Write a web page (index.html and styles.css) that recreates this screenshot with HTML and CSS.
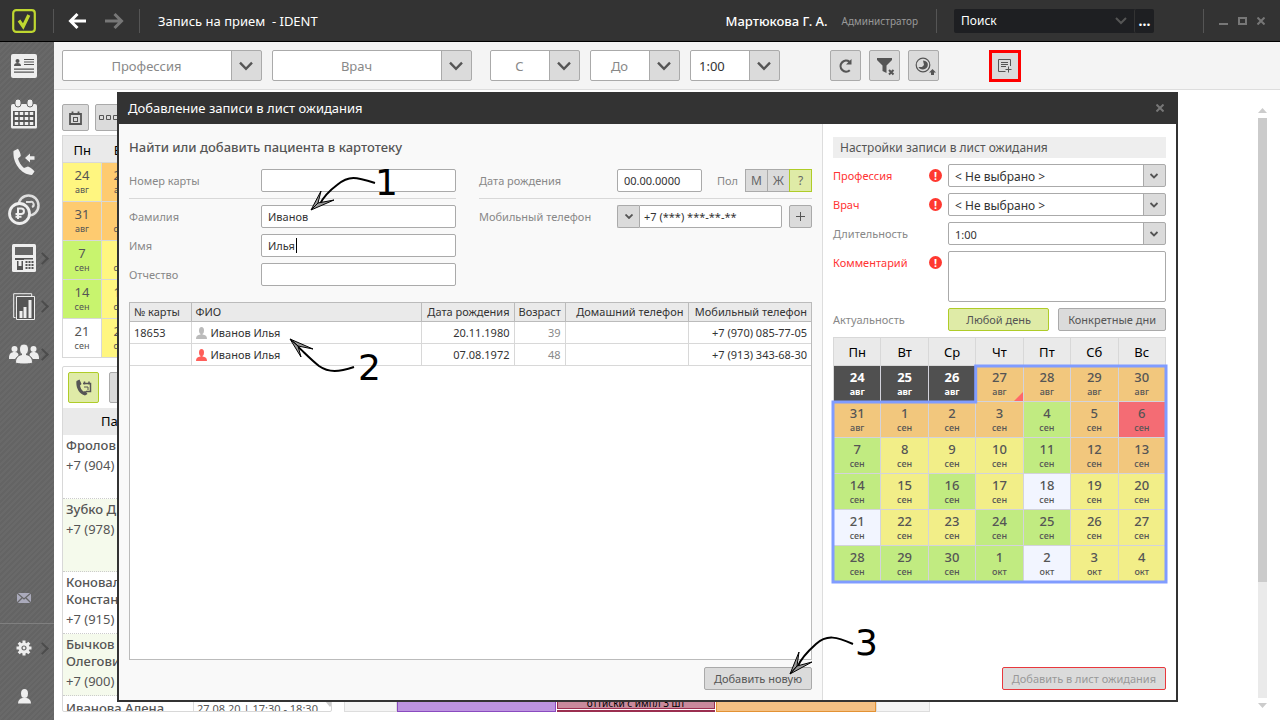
FILE: index.html
```html
<!DOCTYPE html>
<html lang="ru">
<head>
<meta charset="utf-8">
<title>Запись на прием - IDENT</title>
<link rel="stylesheet" href="styles.css">
</head>
<body>
<header class="topbar">
  <svg class="logo" width="24" height="24" viewBox="0 0 24 24" fill="none" stroke="#bfd730"><rect x="1.2" y="1.2" width="21.6" height="21.6" rx="3" stroke-width="2.2"/><path d="M7 11.5l4.200 6L16.800 6" stroke-width="3.200"/></svg>
  <span class="sep"></span>
  <button class="nav-arrow" aria-label="Назад"><svg width="20" height="18" viewBox="0 0 20 18" fill="none" stroke="#fff" stroke-width="3"><path d="M9.500 2L2.500 9l7 7M2.500 9H18"/></svg></button>
  <button class="nav-arrow" aria-label="Вперед"><svg width="20" height="18" viewBox="0 0 20 18" fill="none" stroke="#777" stroke-width="3"><path d="M9.500 2l7 7-7 7M16.500 9H0"/></svg></button>
  <span class="sep"></span>
  <h1 class="page-title">Запись на прием&nbsp; - IDENT</h1>
  <span class="user">Мартюкова Г. А.</span>
  <span class="role">Администратор</span>
  <span class="sep"></span>
  <div class="search">
    <input type="text" placeholder="Поиск" aria-label="Поиск">
    <button class="search-drop" aria-label="История поиска"><svg width="12" height="8" viewBox="0 0 12 8" fill="none" stroke="#555" stroke-width="2"><path d="M1 1l5 5 5-5"/></svg></button>
    <button class="search-more" aria-label="Еще">...</button>
  </div>
  <span class="sep win-sep"></span>
  <div class="window-buttons">
    <button aria-label="Свернуть"><svg width="9" height="10" viewBox="0 0 9 10"><path d="M0 7h9v2H0z" fill="#777"/></svg></button>
    <button aria-label="Развернуть"><svg width="9" height="8" viewBox="0 0 9 8" fill="none" stroke="#777" stroke-width="2"><path d="M1 1h7v6H1z"/></svg></button>
    <button aria-label="Закрыть"><svg width="8" height="8" viewBox="0 0 8 8" stroke="#777" stroke-width="2"><path d="M.500.500l7 7M7.500.500l-7 7"/></svg></button>
  </div>
</header>

<div class="workspace">
  <nav class="sidebar">
    <button aria-label="Картотека"><svg width="26" height="24" viewBox="0 0 26 24"><rect width="26" height="24" rx="2" fill="#eee"/><g fill="#555"><circle cx="6.500" cy="7" r="2"/><path d="M3 12c0-2 1-3 3.500-3S10 10 10 12zM13 5h10v1H13zM13 7.500h10v1H13zM13 10h10v1H13zM3 14.500h20v1.200H3zM3 17.500h20v1.200H3z"/></g></svg></button>
    <button aria-label="Расписание"><svg width="26" height="30" viewBox="0 0 26 30"><path d="M2 5h22a2 2 0 0 1 2 2v21a1.500 1.500 0 0 1-1.500 1.500h-23A1.500 1.500 0 0 1 0 28V7a2 2 0 0 1 2-2z" fill="#eee"/><path d="M2 12h22v15H2z" fill="#555"/><g fill="#eee"><rect x="4" y="0" width="6" height="8" rx="3" stroke="#666"/><rect x="16" y="0" width="6" height="8" rx="3" stroke="#666"/></g><path d="M5.500 13v14M10.500 13v14M15.500 13v14M20.500 13v14" stroke="#eee" stroke-width="3.500" stroke-dasharray="3 2"/></svg></button>
    <button aria-label="Звонки"><svg width="24" height="28" viewBox="0 0 24 28" fill="#eee"><path d="M1.500 3L6 .800C7.500 3 8.500 5 8.800 8L6 10.500c1 4 3 7 6 9.500l4-1.500c3 1 5 3 6.500 5L20 27C9 26.500.500 15 1.500 3zM13 10l5-4.500v2.800h4.500v3.400H18v2.800z"/></svg></button>
    <button aria-label="Финансы"><svg width="32" height="32" viewBox="0 0 32 32" fill="none" stroke="#eee"><circle cx="20.500" cy="11.500" r="10" stroke-width="2.500" stroke="#ddd"/><path d="M18 8h4a2.500 2.500 0 0 1 2 5" stroke="#ddd" stroke-width="2"/><circle cx="11.500" cy="19.500" r="10" fill="#666" stroke-width="2.800"/><path d="M10 25V14.500h3.200a2.700 2.700 0 0 1 0 5.500H7.500M7.500 22.800h6" stroke-width="2"/></svg></button>
    <button class="more" aria-label="Касса"><svg width="24" height="28" viewBox="0 0 24 28"><rect width="24" height="28" rx="1.500" fill="#eee"/><path d="M3 3h18v8H3z" fill="#666"/><path d="M3 14h9v2H3zM5 17h6v9H5z" fill="#555"/><path d="M6.500 17h3v5h-3z" fill="#eee"/><path d="M12 14h9v1.500h-9z" fill="#555"/><path d="M14.500 17v8M17.500 17v8M20.500 17v8" stroke="#555" stroke-width="2" stroke-dasharray="2 1"/></svg></button>
    <button class="more" aria-label="Отчеты"><svg width="22" height="27" viewBox="0 0 22 27" fill="none" stroke="#eee"><path d="M2.500 24.500H.700V.700h18V3"/><path d="M3.500 3.500h18v23h-18z" fill="#555"/><path d="M8 25v-7M12 25V14M17 25V7" stroke-width="3"/></svg></button>
    <button class="more" aria-label="Пациенты"><svg width="30" height="21" viewBox="0 0 30 21" fill="#eee"><circle cx="5.500" cy="5" r="3"/><circle cx="24.500" cy="5" r="3"/><path d="M0 14c0-4 2-6 5.500-6 3 0 4 1.500 4 3.500L6 15H0zM30 14c0-4-2-6-5.500-6-3 0-4 1.500-4 3.500L24 15h6z"/><path d="M15 0c3 0 4.500 2 4.500 5s-1 4.500-2.500 5.500c4 1 6.500 3 6.500 8 0 2-17 2-17 0 0-5 2.500-7 6.500-8-1.500-1-2.500-2.500-2.500-5.500S12 0 15 0z" stroke="#666"/></svg></button>
    <button class="mail" aria-label="Почта"><svg width="14" height="10" viewBox="0 0 14 10"><rect width="14" height="10" fill="#aab"/><path d="M0 0l7 6 7-6M0 10l5-5M14 10L9 5" fill="none" stroke="#666" stroke-width="1.300"/></svg></button>
    <button class="more settings" aria-label="Настройки"><svg width="16" height="16" viewBox="-8 -8 16 16"><g stroke="#eee" stroke-width="3"><path d="M0-7.500v15M-7.500 0h15M-5.300-5.300L5.300 5.300M-5.300 5.300L5.300-5.300"/></g><circle r="5.500" fill="#eee"/><circle r="2" fill="#eee" stroke="#666" stroke-width="1.200"/></svg></button>
    <button aria-label="Профиль"><svg width="13" height="15" viewBox="0 0 13 15" fill="#eee"><ellipse cx="6.500" cy="4.500" rx="3.500" ry="4.500"/><path d="M0 14.500c0-3.500 2-5 4.500-5.500h4c2.500.500 4.500 2 4.500 5.500z"/></svg></button>
  </nav>

  <main class="content">
    <div class="toolbar">
      <select class="big-select wide" aria-label="Профессия"><option>Профессия</option></select>
      <select class="big-select wide last-wide" aria-label="Врач"><option>Врач</option></select>
      <select class="big-select" aria-label="С"><option>С</option></select>
      <select class="big-select" aria-label="До"><option>До</option></select>
      <select class="big-select filled" aria-label="Длительность приема"><option>1:00</option></select>
      <div class="tool-buttons">
        <button class="tool" aria-label="Обновить"><svg width="15" height="16" viewBox="0 0 15 16" fill="none" stroke="#555" stroke-width="2.200"><path d="M11.500 3.800A5.500 5.500 0 1 0 11.800 12.200"/><path d="M13.500 1v5.500H8z" fill="#555" stroke="none"/></svg></button>
        <button class="tool low" aria-label="Сбросить фильтр"><svg width="18" height="18" viewBox="0 0 18 18"><path d="M0 0h15v2L9.500 7.500V15l-4-2V7.500L0 2z" fill="#555"/><path d="M12 12l4.500 4.500M16.500 12L12 16.500" stroke="#555" stroke-width="2"/></svg></button>
        <button class="tool low" aria-label="История"><svg width="21" height="20" viewBox="0 0 21 20"><circle cx="8" cy="8" r="6.800" fill="none" stroke="#555" stroke-width="1.200"/><path d="M8 3.500c7 0 6 9 0 9-2.500 0-4-1-4.500-2.500H7l2-2z" fill="#555"/><path d="M14 15.500L17.500 12l3.500 3.500h-2V18h-3v-2.500z" fill="#555"/></svg></button>
      </div>
      <button class="tool marked" aria-label="Лист ожидания"><svg width="14" height="14" viewBox="0 0 14 14" fill="none" stroke="#555"><path d="M7.500 12.500h-7V.500h12V7M3 3.500h7M3 5.500h7M3 7.500h5M10.500 7.500v6M7.500 10.500h6"/></svg></button>
    </div>

    <div class="board">
      <section class="left-column">
        <div class="mini-buttons">
          <button class="mini" aria-label="Сегодня"><svg width="13" height="14" viewBox="0 0 13 14" fill="none" stroke="#555"><path d="M1 3h11v10H1z" stroke-width="1.800"/><path d="M3.500.500V4M9.500.500V4" stroke-width="1.800"/><rect x="4.500" y="6.500" width="4" height="4"/></svg></button>
          <button class="mini" aria-label="Период"><svg width="19" height="5" viewBox="0 0 19 5" fill="none" stroke="#555"><path d="M.500.500h4v4h-4zM7.500.500h4v4h-4zM14.500.500h4v4h-4z"/></svg></button>
        </div>
        <table class="mini-calendar">
          <colgroup><col class="day"><col class="day"><col></colgroup>
          <tr><th>Пн</th><th>Вт</th><th></th></tr>
          <tr><td class="y">24<small>авг</small></td><td class="o">25<small>авг</small></td><td></td></tr>
          <tr><td class="o">31<small>авг</small></td><td class="o">1<small>сен</small></td><td></td></tr>
          <tr><td class="g">7<small>сен</small></td><td class="y">8<small>сен</small></td><td></td></tr>
          <tr><td class="g">14<small>сен</small></td><td class="y">15<small>сен</small></td><td></td></tr>
          <tr><td>21<small>сен</small></td><td class="y">22<small>сен</small></td><td></td></tr>
        </table>
        <div class="waiting">
          <div class="waiting-tools">
            <button class="call" aria-label="Обзвон"><svg width="16" height="17" viewBox="0 0 16 17" fill="#555"><path d="M.500 2L3.500.500 5.500 5 4 6.500c.500 2.500 1.500 4.500 3.500 6l2-.500 2 3-2.500 1.500C3 15.500-.500 8 .500 2z"/><path d="M7 4.500h7.500v8H10M8.500 2.500v3M13 2.500v3" fill="none" stroke="#555" stroke-width="1.500"/><path d="M8 8h4v3" fill="none" stroke="#555"/></svg></button>
            <button class="call plain" aria-label="Список"></button>
          </div>
          <div class="waiting-head">Пациент</div>
          <div class="patients">
            <div class="patient tall">Фролов<span>+7 (904)</span></div>
            <div class="patient taller alt">Зубко Д.<span>+7 (978)</span></div>
            <div class="patient">Коновалов Константин<span>+7 (915)</span></div>
            <div class="patient alt">Бычков Олегович<span>+7 (900)</span></div>
            <div class="patient split"><b>Иванова Алена</b><time>27.08.20 | 17:30 - 18:30</time><svg width="10" height="6" viewBox="0 0 10 6"><path d="M0 0h10L5 6z" fill="#ccc"/></svg></div>
          </div>
        </div>
      </section>
      <section class="schedule">
        <div class="hours"></div>
        <div class="visit purple"></div>
        <div class="visit-stack"><div class="visit pink">оттиски с импл 3 шт</div><div class="visit pink next"></div></div>
        <div class="visit orange"></div>
        <div class="hours"></div>
      </section>
      <div class="scrollbar">
        <svg width="9" height="5" viewBox="0 0 9 5"><path d="M0 5h9L4.500 0z" fill="#ccc"/></svg>
        <div class="track"><div class="thumb"></div></div>
        <svg width="9" height="5" viewBox="0 0 9 5"><path d="M0 0h9L4.500 5z" fill="#ccc"/></svg>
      </div>
    </div>
  </main>
</div>

<div class="dialog" role="dialog" aria-labelledby="dialog-title">
  <div class="dialog-title"><h2 id="dialog-title">Добавление записи в лист ожидания</h2><button aria-label="Закрыть окно"><svg width="8" height="8" viewBox="0 0 8 8" stroke="#777" stroke-width="2"><path d="M.500.500l7 7M7.500.500l-7 7"/></svg></button></div>
  <div class="dialog-body">
    <section class="search-pane">
      <h3>Найти или добавить пациента в картотеку</h3>
      <div class="form">
        <div class="form-part">
          <div class="field ruled"><label for="card">Номер карты</label><input id="card" type="text"></div>
          <div class="field"><label for="surname">Фамилия</label><input id="surname" type="text" value="Иванов"></div>
          <div class="field"><label for="name">Имя</label><div class="caret-field"><input id="name" type="text" value="Илья"><i class="caret"></i></div></div>
          <div class="field"><label for="patronymic">Отчество</label><input id="patronymic" type="text"></div>
        </div>
        <div class="form-part second">
          <div class="field ruled"><label for="birth">Дата рождения</label><input id="birth" class="birth" type="text" value="00.00.0000"><span class="sex-label">Пол</span><div class="sex"><button>М</button><button>Ж</button><button class="on">?</button></div></div>
          <div class="field"><label for="phone">Мобильный телефон</label><div class="phone"><button aria-label="Код страны"><svg width="8" height="5" viewBox="0 0 8 5" fill="none" stroke="#555" stroke-width="1.800"><path d="M.500.500L4 4 7.500.500"/></svg></button><input id="phone" type="text" value="+7 (***) ***-**-**"></div><button class="plus" aria-label="Добавить телефон"><svg width="9" height="9" viewBox="0 0 9 9" stroke="#555"><path d="M4.500 0v9M0 4.500h9"/></svg></button></div>
        </div>
      </div>
      <div class="results">
        <table>
          <colgroup><col class="c-card"><col><col class="c-date"><col class="c-age"><col class="c-phone"><col class="c-phone"></colgroup>
          <tr><th>№ карты</th><th>ФИО</th><th class="r">Дата рождения</th><th class="r">Возраст</th><th class="r">Домашний телефон</th><th class="r">Мобильный телефон</th></tr>
          <tr><td>18653</td><td><svg width="11" height="12" viewBox="0 0 11 12" fill="#bbb"><ellipse cx="5.500" cy="3.500" rx="2.500" ry="3.500"/><path d="M4.500 6h2v1.500C9.500 8 11 9 11 12H0c0-3 1.500-4 4.500-4.500z"/></svg>Иванов Илья</td><td class="r">20.11.1980</td><td class="r age">39</td><td></td><td class="r">+7 (970) 085-77-05</td></tr>
          <tr><td></td><td><svg width="11" height="12" viewBox="0 0 11 12" fill="#ff5f5a"><ellipse cx="5.500" cy="3.500" rx="2.500" ry="3.500"/><path d="M4.500 6h2v1.500C9.500 8 11 9 11 12H0c0-3 1.500-4 4.500-4.500z"/></svg>Иванов Илья</td><td class="r">07.08.1972</td><td class="r age">48</td><td></td><td class="r">+7 (913) 343-68-30</td></tr>
        </table>
      </div>
      <div class="actions"><button class="btn">Добавить новую</button></div>
    </section>

    <section class="settings-pane">
      <h3>Настройки записи в лист ожидания</h3>
      <div class="settings-form">
        <div class="row required"><label for="prof">Профессия</label><span class="alert">!</span><select id="prof"><option>&lt; Не выбрано &gt;</option></select></div>
        <div class="row required"><label for="doctor">Врач</label><span class="alert">!</span><select id="doctor"><option>&lt; Не выбрано &gt;</option></select></div>
        <div class="row"><label for="length">Длительность</label><select id="length"><option>1:00</option></select></div>
        <div class="row required"><label for="note">Комментарий</label><span class="alert">!</span><textarea id="note"></textarea></div>
        <div class="row"><span class="label">Актуальность</span><div class="choice"><button class="btn on">Любой день</button><button class="btn">Конкретные дни</button></div></div>
      </div>
      <div class="calendar">
        <table>
          <thead><tr><th>Пн</th><th>Вт</th><th>Ср</th><th>Чт</th><th>Пт</th><th>Сб</th><th>Вс</th></tr></thead>
          <tbody>
          <tr><td class="past">24<small>авг</small></td><td class="past">25<small>авг</small></td><td class="past">26<small>авг</small></td><td class="o today">27<small>авг</small></td><td class="o">28<small>авг</small></td><td class="o">29<small>авг</small></td><td class="o">30<small>авг</small></td></tr>
          <tr><td class="o">31<small>авг</small></td><td class="o">1<small>сен</small></td><td class="o">2<small>сен</small></td><td class="o">3<small>сен</small></td><td class="g">4<small>сен</small></td><td class="o">5<small>сен</small></td><td class="red">6<small>сен</small></td></tr>
          <tr><td class="g">7<small>сен</small></td><td class="y">8<small>сен</small></td><td class="y">9<small>сен</small></td><td class="y">10<small>сен</small></td><td class="g">11<small>сен</small></td><td class="o">12<small>сен</small></td><td class="o">13<small>сен</small></td></tr>
          <tr><td class="g">14<small>сен</small></td><td class="y">15<small>сен</small></td><td class="g">16<small>сен</small></td><td class="y">17<small>сен</small></td><td>18<small>сен</small></td><td class="y">19<small>сен</small></td><td class="y">20<small>сен</small></td></tr>
          <tr><td>21<small>сен</small></td><td class="y">22<small>сен</small></td><td class="y">23<small>сен</small></td><td class="g">24<small>сен</small></td><td class="g">25<small>сен</small></td><td class="y">26<small>сен</small></td><td class="y">27<small>сен</small></td></tr>
          <tr><td class="g">28<small>сен</small></td><td class="g">29<small>сен</small></td><td class="g">30<small>сен</small></td><td class="g">1<small>окт</small></td><td>2<small>окт</small></td><td class="y">3<small>окт</small></td><td class="y">4<small>окт</small></td></tr>
          </tbody>
        </table>
        <svg class="range" viewBox="0 0 7 6" preserveAspectRatio="none"><path d="M3 0H7V6H0V1H3z" fill="none" stroke="#809cff" stroke-width="3" vector-effect="non-scaling-stroke"/></svg>
      </div>
      <div class="actions"><button class="btn invalid" disabled>Добавить в лист ожидания</button></div>
    </section>
  </div>
  <svg class="note one" width="92" height="50" viewBox="0 0 92 50"><path d="M64 21C45 15 38 13 26 23 18 29 12 36 9 42" class="line"/><path d="M0 48L10 29 7 41zM0 48L7 41 23 38z" class="tip"/><text x="64" y="33">1</text></svg>
  <svg class="note two" width="98" height="46" viewBox="0 0 98 46"><path d="M65 29C50 34 40 35 30 28 20 20 13 12 8 8" class="line"/><path d="M1 1L24 11 9 8zM1 1L9 8 12 19z" class="tip"/><text x="69" y="42">2</text></svg>
  <svg class="note three" width="92" height="50" viewBox="0 0 92 50"><path d="M64 16C48 9 38 6 27 16 17 25 11 33 9 38" class="line"/><path d="M1 46L10 24 8 38zM1 46L8 38 23 34z" class="tip"/><text x="66" y="27">3</text></svg>
</div>
</body>
</html>
```

FILE: styles.css
```css
* { box-sizing: border-box; }
body { margin: 0; height: 100vh; display: flex; flex-direction: column; overflow: hidden; position: relative; background: #fff; color: #333; font: 11px/16px "Noto Sans", "Open Sans", sans-serif; }
button, input, select, textarea { font: inherit; color: inherit; margin: 0; border-radius: 2px; }
button { padding: 0; border: 0; background: none; display: flex; align-items: center; justify-content: center; }
h1, h2, h3 { margin: 0; font-weight: 400; }
svg { display: block; flex: none; }

.topbar { height: 42px; flex: none; display: flex; align-items: center; background: #333; border-bottom: 1px solid #000; color: #fff; padding: 0 15px 0 12px; }
.sep { width: 1px; height: 24px; background: #555; }
.logo { margin-right: 17px; }
.nav-arrow { width: 20px; margin-left: 14px; }
.nav-arrow + .nav-arrow { margin: 0 14px 0 17px; }
.page-title { font-size: 13px; margin-left: 18px; flex: 1; }
.user { font-size: 13px; font-weight: 500; }
.role { font-size: 10px; color: #999; margin: 0 18px 0 14px; }
.search { display: flex; width: 200px; height: 24px; background: #1e1f22; border-radius: 2px; margin: 0 49px 0 17px; }
.search input { flex: 1; min-width: 0; border: 0; background: none; padding: 0 7px; font-size: 12px; }
.search input::placeholder { color: #fff; opacity: 1; }
.search-drop { width: 26px; }
.search-more { width: 20px; border-left: 1px solid #333; font-size: 14px; font-weight: 700; }
.win-sep { margin-right: 15px; }
.window-buttons { display: flex; gap: 10px; }

.workspace { flex: 1; min-height: 0; display: flex; }
.sidebar { width: 54px; flex: none; display: flex; flex-direction: column; background: repeating-linear-gradient(135deg, #646464 0 2px, #696969 2px 4px); }
.sidebar button { height: 48px; padding-right: 6px; position: relative; border-radius: 0; flex: none; }
.sidebar .mail { margin-top: auto; height: 51px; border-bottom: 1px solid #808080; }
.more::after { content: ""; position: absolute; right: 7px; top: 20px; width: 7px; height: 7px; border: solid #4c4c4c; border-width: 2px 2px 0 0; transform: rotate(45deg); }

.content { flex: 1; min-width: 0; display: flex; flex-direction: column; }
.toolbar { height: 48px; flex: none; display: flex; align-items: center; gap: 10px; padding-left: 8px; background: #f4f4f4; border-bottom: 1px solid #ddd; }
.big-select { appearance: none; width: 90px; height: 31px; border: 1px solid #aaa; padding: 0 31px 0 0; color: #888; font-size: 13px; text-align: center; text-align-last: center; background: url("data:image/svg+xml,%3Csvg xmlns='http://www.w3.org/2000/svg' width='30' height='30'%3E%3Cpath d='M0 0h30v30H0z' fill='%23dbdbdb'/%3E%3Cpath d='M.5 0v30' stroke='%23aaa'/%3E%3Cpath d='M9 12l6 6 6-6' fill='none' stroke='%23555' stroke-width='2.400'/%3E%3C/svg%3E") right center no-repeat #fff; }
.wide { width: 200px; }
.last-wide { margin-right: 8px; }
.filled { color: #333; text-align: left; text-align-last: left; padding-left: 8px; }
.tool-buttons { display: flex; gap: 8px; margin: 0 40px; }
.tool { width: 31px; height: 31px; border: 1px solid #aaa; background: #dbdbdb; }
.low { padding: 3px 0 0 3px; }
.marked { width: 32px; height: 32px; border: 3px solid red; border-radius: 0; }

.board { flex: 1; min-height: 0; display: flex; padding: 14px 13px 8px 8px; }
.left-column { width: 270px; flex: none; display: flex; flex-direction: column; }
.mini-buttons { display: flex; gap: 6px; margin-bottom: 4px; }
.mini { width: 27px; height: 27px; border: 1px solid #aaa; background: #dbdbdb; }
.mini-calendar { width: 100%; table-layout: fixed; border-collapse: collapse; border: 1px solid #d8d8d8; text-align: center; }
.day { width: 39px; }
.mini-calendar th { height: 27px; padding: 2px 0 0; font-size: 13px; font-weight: 400; color: #000; background: #eaeaea; }
.mini-calendar td { height: 39px; padding: 0; border: 1px solid #d8d8d8; font-size: 13px; line-height: 16px; color: #555; }
td small { display: block; font-size: 9px; line-height: 14px; }
.mini-calendar .y { background: #fff680; }
.mini-calendar .o { background: #fecb70; }
.mini-calendar .g { background: #c8f46e; }
.waiting { flex: 1; min-height: 0; overflow: hidden; margin-top: 8px; display: flex; flex-direction: column; border: 1px solid #d8d8d8; border-radius: 2px; }
.waiting-tools { display: flex; gap: 10px; padding: 5px; }
.call { width: 31px; height: 31px; border: 1px solid #afcc28; background: #dfeba7; }
.plain { border-color: #aaa; background: #dbdbdb; }
.waiting-head { line-height: 27px; flex: none; padding-left: 38px; background: #eaeaea; color: #000; font-size: 13px; }
.patients { flex: 1; min-height: 0; overflow: hidden; }
.patient { padding: 2px 160px 3px 3px; min-height: 62px; border-bottom: 1px dotted #ccc; font-size: 13px; line-height: 17px; font-weight: 500; color: #555; }
.patient span { display: block; font-weight: 400; line-height: 22px; white-space: nowrap; }
.tall { min-height: 64px; }
.taller { min-height: 73px; }
.alt { background: #f5faec; }
.split { display: flex; padding: 0 5px 0 3px; gap: 7px; }
.split b { width: 120px; flex: none; font-weight: 500; padding-top: 4px; white-space: nowrap; }
.split time { flex: 1; border-left: 1px solid #ddd; padding: 4px 0 0 3px; font-size: 11px; font-weight: 400; white-space: nowrap; }
.split svg { margin-top: 5px; }
.schedule { flex: 1; min-width: 0; margin: 0 0 0 12px; display: grid; grid-template-columns: 53px 159px 160px 160px 54px; align-content: end; }
.schedule > * { height: 40px; }
.hours { background: #f4f4f4; border: 1px solid #ddd; }
.visit { border: 1px solid #8a4bc0; background: #bd94e0; overflow: hidden; }
.visit-stack { display: flex; flex-direction: column; gap: 1px; padding: 0 1px; }
.pink { flex: 1; border-color: #9b2f50; background: #c98a9c; color: #000; font-size: 10px; text-align: center; display: flex; align-items: flex-end; justify-content: center; line-height: 9px; }
.visit-stack .next { flex: 0 0 2px; }
.orange { border-color: #e39234; background: #f4c083; }
.scrollbar { width: 9px; display: flex; flex-direction: column; gap: 5px; padding: 4px 0; }
.track { flex: 1; background: #eaeaea; }
.thumb { height: 80%; background: #cbcbcb; }

.dialog { position: absolute; left: 117px; right: 102px; top: 92px; bottom: 18px; display: flex; flex-direction: column; border: 2px solid #333; border-top: 0; background: #f9f9f9; }
.dialog-title { height: 32px; flex: none; display: flex; align-items: center; justify-content: space-between; background: #333; color: #fff; padding: 0 12px 0 9px; }
.dialog-title h2 { font-size: 13px; }
.dialog-body { flex: 1; min-height: 0; display: flex; }
.search-pane { flex: 1; min-width: 0; display: flex; flex-direction: column; padding: 13px 10px 10px; }
.search-pane h3 { font-size: 13px; line-height: 20px; font-weight: 500; color: #555; }
.form { display: grid; grid-template-columns: 327fr 333fr; gap: 23px; margin-top: 12px; }
.form-part { display: flex; flex-direction: column; gap: 6px; }
.field { display: flex; align-items: center; color: #888; min-width: 0; }
.ruled { padding-bottom: 6px; border-bottom: 1px solid #d8d8d8; }
.field label { width: 132px; flex: none; }
.second .field label { width: 138px; }
input, select, textarea { border: 1px solid #aaa; background-color: #fff; color: #333; }
.field input { flex: 1; min-width: 0; width: 100%; height: 23px; padding: 0 6px; }
.caret-field { flex: 1; position: relative; }
.caret { position: absolute; left: 35px; top: 4px; width: 1px; height: 15px; background: #000; }
.field .birth { flex: 0 0 85px; }
.sex-label { margin: 0 8px 0 auto; }
.sex { display: flex; }
.sex button { width: 23px; height: 23px; border: 1px solid #aaa; background: #dbdbdb; margin-left: -1px; color: #666; border-radius: 0; font-size: 12px; }
.sex button.on { border-color: #afcc28; background: #dfeba7; }
.phone { display: flex; flex: 1; min-width: 0; }
.phone button { width: 22px; flex: none; border: 1px solid #aaa; border-right: 0; background: #dbdbdb; border-radius: 2px 0 0 2px; }
.phone input { padding: 0 4px; border-radius: 0 2px 2px 0; }
.plus { width: 23px; height: 23px; margin-left: 7px; border: 1px solid #aaa; background: #dbdbdb; }
.results { flex: 1; min-height: 0; margin: 16px 0 7px; border: 1px solid #bbb; background: #fff; overflow: hidden; }
.results table { width: 100%; table-layout: fixed; border-collapse: collapse; }
.results th { height: 18px; padding: 0 4px; line-height: 18px; background: #eaeaea; font-weight: 400; text-align: left; white-space: nowrap; border: 1px solid #bbb; border-width: 0 1px 1px 0; }
.results td { height: 22px; padding: 0 4px; border: 1px solid #d8d8d8; border-width: 0 1px 1px 0; white-space: nowrap; }
.results th:last-child, .results td:last-child { border-right: 0; }
.results .r { text-align: right; }
.results .age { color: #888; }
.results td svg { display: inline-block; vertical-align: -2px; margin-right: 4px; }
.c-card { width: 61px; } .c-date { width: 93px; } .c-age { width: 51px; } .c-phone { width: 123px; }
.actions { display: flex; justify-content: flex-end; }
.btn { height: 23px; padding: 0 9px; border: 1px solid #aaa; background: #dbdbdb; color: #555; white-space: nowrap; }
.btn.on { border-color: #afcc28; background: #dfeba7; }
.btn.invalid { border-color: #e8383d; color: #999; }

.settings-pane { width: 354px; flex: none; display: flex; flex-direction: column; padding: 13px 10px 10px; background: #fff; border-left: 1px solid #ddd; }
.settings-pane h3 { height: 21px; line-height: 21px; padding-left: 7px; font-size: 12px; background: #eee; color: #555; }
.settings-form { display: flex; flex-direction: column; gap: 6px; margin-top: 6px; }
.row { display: flex; align-items: flex-start; color: #888; line-height: 23px; }
.row label, .label { flex: 0 0 115px; }
.required label { flex-basis: 96px; color: #f33; }
.alert { width: 13px; height: 13px; margin: 5px 6px 0 0; flex: none; border-radius: 50%; background: #ff3830; color: #fff; font-size: 11px; line-height: 13px; font-weight: 700; text-align: center; }
.row select { appearance: none; flex: 1; min-width: 0; height: 23px; padding: 0 24px 0 6px; background: url("data:image/svg+xml,%3Csvg xmlns='http://www.w3.org/2000/svg' width='22' height='21'%3E%3Cpath d='M0 0h22v21H0z' fill='%23dbdbdb'/%3E%3Cpath d='M.5 0v21' stroke='%23aaa'/%3E%3Cpath d='M7.500 9l3.500 3.500L14.500 9' fill='none' stroke='%23555' stroke-width='1.800'/%3E%3C/svg%3E") right center no-repeat #fff; }
.required select { font-size: 12px; }
.row textarea { flex: 1; min-width: 0; height: 51px; resize: none; }
.choice { flex: 1; display: flex; gap: 9px; }
.choice .btn { flex: 1 1 0; }
.calendar { margin-top: 6px; position: relative; }
.calendar table { width: 100%; table-layout: fixed; border-collapse: separate; border-spacing: 0; text-align: center; border-left: 1px solid #d8d8d8; }
.calendar th { height: 29px; padding: 0; background: #eaeaea; border: 1px solid #d8d8d8; border-left: 0; color: #000; font-size: 13px; font-weight: 400; }
.calendar td { height: 36px; padding: 0; background: #f2f5ff; border: 1px solid #d3d3dc; border-width: 0 1px 1px 0; color: #555; font-size: 13px; line-height: 16px; font-weight: 500; position: relative; }
.calendar .past { background: #505050; color: #fff; font-weight: 700; }
.calendar .o { background: #f2c77d; }
.calendar .y { background: #f2ee88; }
.calendar .g { background: #c1eb81; }
.calendar .red { background: #f46c74; }
.today::after { content: ""; position: absolute; right: 0; bottom: 0; border: solid transparent; border-width: 9px 0 0 9px; border-right: 0; border-bottom: 9px solid #ff6868; border-top: 0; }
.range { position: absolute; left: 0; top: 29px; width: 100%; height: calc(100% - 29px); overflow: visible; }
.settings-pane .actions { margin-top: auto; }

.note { position: absolute; pointer-events: none; overflow: visible; }
.note .line { fill: none; stroke: #000; stroke-width: 2; }
.note .tip { fill: #999; stroke: #000; stroke-width: 1; stroke-linejoin: round; }
.note text { font: 36px "DejaVu Sans", sans-serif; fill: #000; }
.one { left: 192px; top: 70px; }
.two { left: 170px; top: 246px; }
.three { left: 670px; top: 536px; }
```
